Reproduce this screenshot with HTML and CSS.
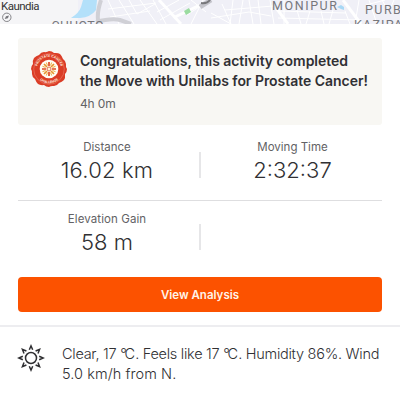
FILE: index.html
```
<!DOCTYPE html>
<html lang="en">
<head>
<meta charset="utf-8">
<title>Activity</title>
<link rel="stylesheet" href="styles.css">
</head>
<body>
<main class="screen">
  <svg class="map" viewBox="0 0 400 24" width="400" height="24">
    <rect width="400" height="24" fill="#f0f0f7"/>
    <rect width="78" height="24" fill="#f5f5f7"/>
    <g fill="none" stroke="#fff" stroke-width="1">
      <path d="M108 0L119 24M119 0l15 24M129 0l8 14 18-10M140 0l17 24M108 9l48-6M110 17l40-6M153 0l13 24M157 12l22-12M160 20l30-17M187 15l15-10M191 0l15 12M203 0l-12 24"/>
      <path d="M211 13l20 11M222 4l9 20M233 0l-3 24M243 0l-4 24M249 0l4 24M211 18l38-6 22 4M225 10l48-4M258 0l3 24M270 0l4 24M279 11l67 2M284 0v24M297 10l4 14M310 11l-4 13M321 11l3 13M333 10l-4 14M345 11l5 13M278 18l83 2M359 0l-4 24M366 5l19-5M369 0l8 24M382 0l4 7M394 0l-3 7"/>
    </g>
    <path d="M83 0H97L96 10Q91 17 80 18H71Q79 13 81 7Z" fill="#b3e0fa"/>
    <path d="M101 0Q97 12 98 20M96 22Q111 18 120 20L131 24" fill="none" stroke="#d0d0d6" stroke-width="4"/>
    <path d="M159 0L181 24M175 17L200 5M277 9L288 24M343 0L361 24" fill="none" stroke="#fff" stroke-width="3"/>
    <path d="M200 7L211 0" stroke="#c4c4cb" stroke-width="5"/>
    <path d="M201 3Q207 4 210 0" fill="none" stroke="#77777b" stroke-width="2"/>
    <path d="M184 11l5-3 2 4-5 3z" fill="#9bdca0"/>
    <path d="M337 7l4-2 3 2v3l-3-1z" fill="#a8d8f5"/>
    <circle cx="6.8" cy="17.3" r="4.2" fill="#f6f6f8" stroke="#77777c" stroke-width=".9"/>
    <path d="M4.7 19.1L6 16.3 9 15.5 7.9 18.3Z" fill="#77777c"/>
    <text class="map-town" x="1" y="9.6" textLength="38.500">Kaundia</text>
    <g class="map-area">
      <text x="51.5" y="30" textLength="52">CHHOTO</text>
      <text x="272" y="9.8" textLength="65">MONIPUR</text>
      <text x="365" y="13.7" textLength="46">PURBO</text>
      <text x="354" y="29" textLength="57">KAZIPAR</text>
    </g>
  </svg>

  <section class="award">
    <svg class="badge" viewBox="0 0 36 36" width="36" height="36">
      <defs>
        <path id="arc-top" d="M6 18a12 12 0 0 1 24 0"/>
        <path id="arc-bottom" d="M3.7 18a14.3 14.3 0 0 0 28.6 0"/>
      </defs>
      <path d="M18 0Q21 0 23 2Q27 1.500 29 3Q31 5 32 8Q35 10 35 13Q34.500 16 36 18Q36 21 34 23Q34.500 27 33 29Q31 31 28 32Q26 35 23 35Q20 34.500 18 36Q15 36 13 34Q9 34.500 7 33Q5 31 4 28Q1 26 1 23Q1.500 20 0 18Q0 15 2 13Q1.500 9 3 7Q5 5 8 4Q10 1 13 1Q16 1.500 18 0Z" fill="#db3d26"/>
      <circle cx="18" cy="18" r="15.300" fill="none" stroke="#ef8a76" stroke-width=".5"/>
      <circle cx="18" cy="18" r="9.300" fill="#fffdf5"/>
      <text class="badge-text"><textPath href="#arc-top" startOffset="50%">PROSTATE CANCER</textPath></text>
      <text class="badge-text"><textPath href="#arc-bottom" startOffset="50%">CHALLENGE</textPath></text>
      <g stroke="#df4b24" stroke-width="1.700">
        <path d="M18 11v4M18 21v4M11 18h4M21 18h4"/>
        <path d="M13 13l3 3M20 20l3 3M13 23l3-3M20 16l3-3" stroke="#e8932e"/>
        <path d="M15.300 11.500l1.200 3M19.500 21.500l1.200 3M11.500 20.700l3-1.200M21.500 16.500l3-1.200M11.500 15.300l3 1.200M21.500 19.500l3 1.200M15.300 24.500l1.200-3M19.500 14.500l1.200-3" stroke="#edaa3a" stroke-width="1"/>
      </g>
      <circle cx="18" cy="18" r="2" fill="#fff6da" stroke="#d74b2a" stroke-width=".8"/>
    </svg>
    <div class="award-copy">
      <h1 class="award-title"><span class="title-one">Congratulations, this activity completed</span><br><span class="title-two">the Move with Unilabs for Prostate Cancer!</span></h1>
      <p class="award-time">4h 0m</p>
    </div>
  </section>

  <section class="stats">
    <div class="stat-row">
      <div class="stat"><span class="label">Distance</span><span class="value distance">16.02 km</span></div>
      <div class="stat"><span class="label">Moving Time</span><span class="value">2:32:37</span></div>
    </div>
    <div class="stat-row">
      <div class="stat"><span class="label gain">Elevation Gain</span><span class="value">58 m</span></div>
      <div class="stat"></div>
    </div>
  </section>

  <button class="analysis" type="button">View Analysis</button>

  <section class="weather">
    <svg class="sun" viewBox="0 0 28 28" width="28" height="28" fill="none" stroke="#303033" stroke-width="1.500">
      <circle cx="14" cy="14" r="5.500"/>
      <path id="ray" d="M12.300 5.800L14 1.900 15.700 5.800"/>
      <use href="#ray" transform="rotate(45 14 14)"/>
      <use href="#ray" transform="rotate(90 14 14)"/>
      <use href="#ray" transform="rotate(135 14 14)"/>
      <use href="#ray" transform="rotate(180 14 14)"/>
      <use href="#ray" transform="rotate(225 14 14)"/>
      <use href="#ray" transform="rotate(270 14 14)"/>
      <use href="#ray" transform="rotate(315 14 14)"/>
    </svg>
    <p class="forecast"><span class="forecast-one">Clear, 17 <span class="unit">°C</span>. Feels like 17 <span class="unit">°C</span>. Humidity 86%. Wind</span><br><span class="forecast-two">5.0 km/h from N.</span></p>
  </section>
</main>
</body>
</html>
```
FILE: styles.css
```
* { box-sizing: border-box; }
body { margin: 0; background: #fff; font-family: Inter, "Liberation Sans", sans-serif; color: #303033; }
.screen { width: 400px; height: 400px; overflow: hidden; }
.map { display: block; }
.map-town { font: 11.500px Roboto, sans-serif; fill: #333; }
.map-area { font: 12.500px Roboto, sans-serif; fill: #77777c; }

.award { display: flex; gap: 13px; height: 87px; margin: 14px 18px 0; padding: 13px 0 0 13px; background: #f8f7f3; border-radius: 3px; }
.badge { flex: none; }
.badge-text { font: 700 3.300px Inter, sans-serif; fill: #ffe9df; text-anchor: middle; }
.award-title { margin: 0; font-size: 14px; line-height: 20px; font-weight: 600; white-space: nowrap; }
.title-one { letter-spacing: -0.05px; }
.title-two { letter-spacing: -0.03px; }
.award-time { margin: 4px 0 0; font-size: 12px; line-height: 17px; letter-spacing: -0.15px; color: #626265; }

.stats { margin: 0 18px; }
.stat-row { display: grid; grid-template-columns: 1fr 1fr; height: 75px; padding-top: 13px; }
.stat-row + .stat-row { height: 77px; padding-top: 9px; border-top: 1px solid #dedee0; }
.stat { display: flex; flex-direction: column; align-items: center; padding-right: 4px; white-space: nowrap; }
.stat + .stat { padding: 0 0 0 3px; position: relative; }
.stat + .stat::before { content: ""; position: absolute; left: -1px; top: 14px; width: 2px; height: 26px; background: #e6e6e8; }
.label { font-size: 11.500px; line-height: 18px; color: #626265; }
.gain { letter-spacing: 0.1px; }
.value { font-size: 22px; line-height: 29px; font-weight: 350; }
.distance { letter-spacing: 0.2px; }

.analysis { display: block; width: 364px; height: 35px; margin: 0 18px; padding: 0; border: 0; border-radius: 4px; background: #fc5200; color: #fff4e9; font: 600 11.500px Inter, sans-serif; }

.weather { display: flex; gap: 17px; height: 74px; margin-top: 13px; padding: 18px 0 0 17px; border-top: 2px solid #ededf0; }
.sun { flex: none; margin-top: -1px; }
.forecast { margin: -1px 0 0; font-size: 14.500px; line-height: 20px; font-weight: 350; white-space: nowrap; }
.forecast-one { letter-spacing: -0.27px; }
.forecast-two { letter-spacing: 0.06px; }
.unit { letter-spacing: -2px; margin-right: 2px; }
```
